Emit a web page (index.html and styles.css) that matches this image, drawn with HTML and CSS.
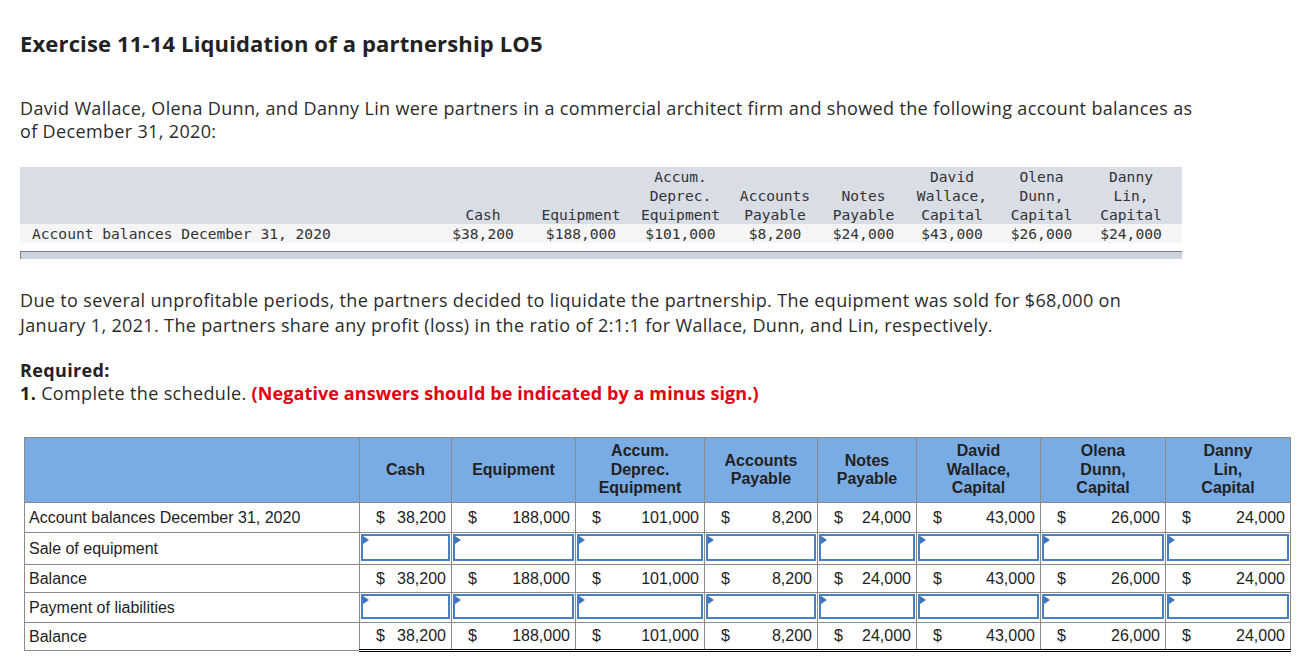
FILE: index.html
```html
<!DOCTYPE html>
<html lang="en">
<head>
<meta charset="utf-8">
<title>Exercise 11-14 Liquidation of a partnership LO5</title>
<link rel="stylesheet" href="styles.css">
</head>
<body>
<div class="page">
  <h1 class="title">Exercise 11-14 Liquidation of a partnership LO5</h1>
  <p class="text intro">David Wallace, Olena Dunn, and Danny Lin were partners in a commercial architect firm and showed the following account balances as of December 31, 2020:</p>

  <div class="balances">
    <table class="mono">
      <colgroup>
        <col class="c-label"><col class="c-cash"><col class="c-equip"><col class="c-accum"><col class="c-ap"><col class="c-np"><col class="c-dw"><col class="c-od"><col class="c-dl"><col class="c-end">
      </colgroup>
      <thead>
        <tr>
          <th></th>
          <th>Cash</th>
          <th>Equipment</th>
          <th>Accum.<br>Deprec.<br>Equipment</th>
          <th>Accounts<br>Payable</th>
          <th>Notes<br>Payable</th>
          <th>David<br>Wallace,<br>Capital</th>
          <th>Olena<br>Dunn,<br>Capital</th>
          <th>Danny<br>Lin,<br>Capital</th>
          <th></th>
        </tr>
      </thead>
      <tbody>
        <tr>
          <td class="lbl">Account balances December 31, 2020</td>
          <td>$38,200</td>
          <td>$188,000</td>
          <td>$101,000</td>
          <td>$8,200</td>
          <td>$24,000</td>
          <td>$43,000</td>
          <td>$26,000</td>
          <td>$24,000</td>
          <td></td>
        </tr>
      </tbody>
    </table>
    <div class="scrollbar"></div>
  </div>

  <p class="text due">Due to several unprofitable periods, the partners decided to liquidate the partnership. The equipment was sold for $68,000 on<br>January 1, 2021. The partners share any profit (loss) in the ratio of 2:1:1 for Wallace, Dunn, and Lin, respectively.</p>

  <p class="text req"><strong>Required:</strong><br><strong>1.</strong> Complete the schedule. <span class="note">(Negative answers should be indicated by a minus sign.)</span></p>

  <table class="sched">
    <colgroup>
      <col class="s-label"><col class="s-cash"><col class="s-equip"><col class="s-accum"><col class="s-ap"><col class="s-np"><col class="s-dw"><col class="s-od"><col class="s-dl">
    </colgroup>
    <thead>
      <tr>
        <th></th>
        <th>Cash</th>
        <th>Equipment</th>
        <th>Accum.<br>Deprec.<br>Equipment</th>
        <th>Accounts<br>Payable</th>
        <th>Notes<br>Payable</th>
        <th>David<br>Wallace,<br>Capital</th>
        <th>Olena<br>Dunn,<br>Capital</th>
        <th>Danny<br>Lin,<br>Capital</th>
      </tr>
    </thead>
    <tbody>
      <tr class="r1">
        <td class="lbl">Account balances December 31, 2020</td>
        <td><div class="money"><span>$</span><span>38,200</span></div></td>
        <td><div class="money"><span>$</span><span>188,000</span></div></td>
        <td><div class="money"><span>$</span><span>101,000</span></div></td>
        <td><div class="money"><span>$</span><span>8,200</span></div></td>
        <td><div class="money"><span>$</span><span>24,000</span></div></td>
        <td><div class="money"><span>$</span><span>43,000</span></div></td>
        <td><div class="money"><span>$</span><span>26,000</span></div></td>
        <td><div class="money"><span>$</span><span>24,000</span></div></td>
      </tr>
      <tr class="r2 entry">
        <td class="lbl">Sale of equipment</td>
        <td class="in"><div class="inp"></div></td>
        <td class="in"><div class="inp"></div></td>
        <td class="in"><div class="inp"></div></td>
        <td class="in"><div class="inp"></div></td>
        <td class="in"><div class="inp"></div></td>
        <td class="in"><div class="inp"></div></td>
        <td class="in"><div class="inp"></div></td>
        <td class="in"><div class="inp"></div></td>
      </tr>
      <tr class="r3 total">
        <td class="lbl">Balance</td>
        <td><div class="money"><span>$</span><span>38,200</span></div></td>
        <td><div class="money"><span>$</span><span>188,000</span></div></td>
        <td><div class="money"><span>$</span><span>101,000</span></div></td>
        <td><div class="money"><span>$</span><span>8,200</span></div></td>
        <td><div class="money"><span>$</span><span>24,000</span></div></td>
        <td><div class="money"><span>$</span><span>43,000</span></div></td>
        <td><div class="money"><span>$</span><span>26,000</span></div></td>
        <td><div class="money"><span>$</span><span>24,000</span></div></td>
      </tr>
      <tr class="r4 entry">
        <td class="lbl">Payment of liabilities</td>
        <td class="in"><div class="inp"></div></td>
        <td class="in"><div class="inp"></div></td>
        <td class="in"><div class="inp"></div></td>
        <td class="in"><div class="inp"></div></td>
        <td class="in"><div class="inp"></div></td>
        <td class="in"><div class="inp"></div></td>
        <td class="in"><div class="inp"></div></td>
        <td class="in"><div class="inp"></div></td>
      </tr>
      <tr class="r5 total final">
        <td class="lbl">Balance</td>
        <td><div class="money"><span>$</span><span>38,200</span></div></td>
        <td><div class="money"><span>$</span><span>188,000</span></div></td>
        <td><div class="money"><span>$</span><span>101,000</span></div></td>
        <td><div class="money"><span>$</span><span>8,200</span></div></td>
        <td><div class="money"><span>$</span><span>24,000</span></div></td>
        <td><div class="money"><span>$</span><span>43,000</span></div></td>
        <td><div class="money"><span>$</span><span>26,000</span></div></td>
        <td><div class="money"><span>$</span><span>24,000</span></div></td>
      </tr>
    </tbody>
  </table>
</div>
</body>
</html>
```

FILE: styles.css
```css
html, body {
  margin: 0;
  padding: 0;
  background: #ffffff;
}

.page {
  padding: 29px 20px 0 20px;
  color: #2b2b2b;
  font-family: "Open Sans", "Lato", sans-serif;
}

.title {
  margin: 0;
  font-size: 22px;
  line-height: 28px;
  font-weight: 700;
  letter-spacing: 0.15px;
  color: #222;
}

.text {
  margin: 0;
  font-size: 18px;
  line-height: 23px;
  letter-spacing: 0.35px;
  width: 1180px;
}

.intro {
  margin-top: 40px;
}

/* first (read-only) table */
.balances {
  margin-top: 24px;
  width: 1162px;
}

.mono {
  width: 1162px;
  border-collapse: collapse;
  table-layout: fixed;
  font-family: "DejaVu Sans Mono", "Liberation Mono", monospace;
  font-size: 14.6px;
  line-height: 19px;
  color: #333;
}

.mono th {
  background: #d8dde6;
  font-weight: 400;
  text-align: center;
  vertical-align: bottom;
  padding: 0;
  white-space: nowrap;
}

.mono td {
  background: #f5f5f5;
  text-align: center;
  padding: 0;
  white-space: nowrap;
}

.mono td.lbl {
  text-align: left;
  padding-left: 12px;
}

.c-label { width: 415px; }
.c-cash { width: 96px; }
.c-equip { width: 100px; }
.c-accum { width: 99px; }
.c-ap { width: 90px; }
.c-np { width: 87px; }
.c-dw { width: 90px; }
.c-od { width: 89px; }
.c-dl { width: 90px; }
.c-end { width: 6px; }

.scrollbar {
  margin-top: 8px;
  height: 7px;
  border-top: 1px solid #7d7d7d;
  border-left: 1px solid #7d7d7d;
  background: #cdd3df;
}

.due {
  margin-top: 29px;
  line-height: 25px;
}

.req {
  margin-top: 21px;
}

.req strong {
  font-weight: 700;
  color: #222;
}

.note {
  color: #e4000f;
  font-weight: 700;
  letter-spacing: 0.1px;
}

/* schedule table */
.sched {
  margin: 32px 0 0 4px;
  width: 1266px;
  border-collapse: collapse;
  table-layout: fixed;
  font-family: "Liberation Sans", Arial, sans-serif;
  font-size: 16px;
  color: #1e1e1e;
  border: 1px solid #8a8a8a;
}

.s-label { width: 335px; }
.s-cash { width: 92px; }
.s-equip { width: 124px; }
.s-accum { width: 129px; }
.s-ap { width: 113px; }
.s-np { width: 99px; }
.s-dw { width: 124px; }
.s-od { width: 125px; }
.s-dl { width: 125px; }

.sched th {
  background: #79ace4;
  border: 1px solid #8a8a8a;
  height: 64px;
  padding: 0;
  font-weight: 700;
  line-height: 18.5px;
  text-align: center;
  color: #222;
}

.sched td {
  border: 1px solid #8a8a8a;
  padding: 0;
  white-space: nowrap;
}

.sched td.lbl {
  padding-left: 4px;
}

.sched .r1 td { height: 29px; }
.sched .r2 td { height: 29px; }
.sched .r3 td { height: 27px; }
.sched .r4 td { height: 27px; }
.sched .r5 td { height: 26px; }

.money {
  display: flex;
  justify-content: space-between;
  padding: 0 5px 0 16px;
}

.sched .total td:not(.lbl) {
  border-top: 1px solid #000;
}

.sched .final td:not(.lbl) {
  border-bottom: 3px double #000;
}

.sched td.in {
  padding: 1px;
  vertical-align: top;
}

.inp {
  position: relative;
  box-sizing: border-box;
  height: 27px;
  border: 2px solid #4a7fc3;
  background: #fff;
}

.r4 .inp { height: 25px; }

.inp::before {
  content: "";
  position: absolute;
  top: 0;
  left: 0;
  width: 0;
  height: 0;
  border-top: 4px solid transparent;
  border-bottom: 4px solid transparent;
  border-left: 6px solid #3d74be;
}
```
